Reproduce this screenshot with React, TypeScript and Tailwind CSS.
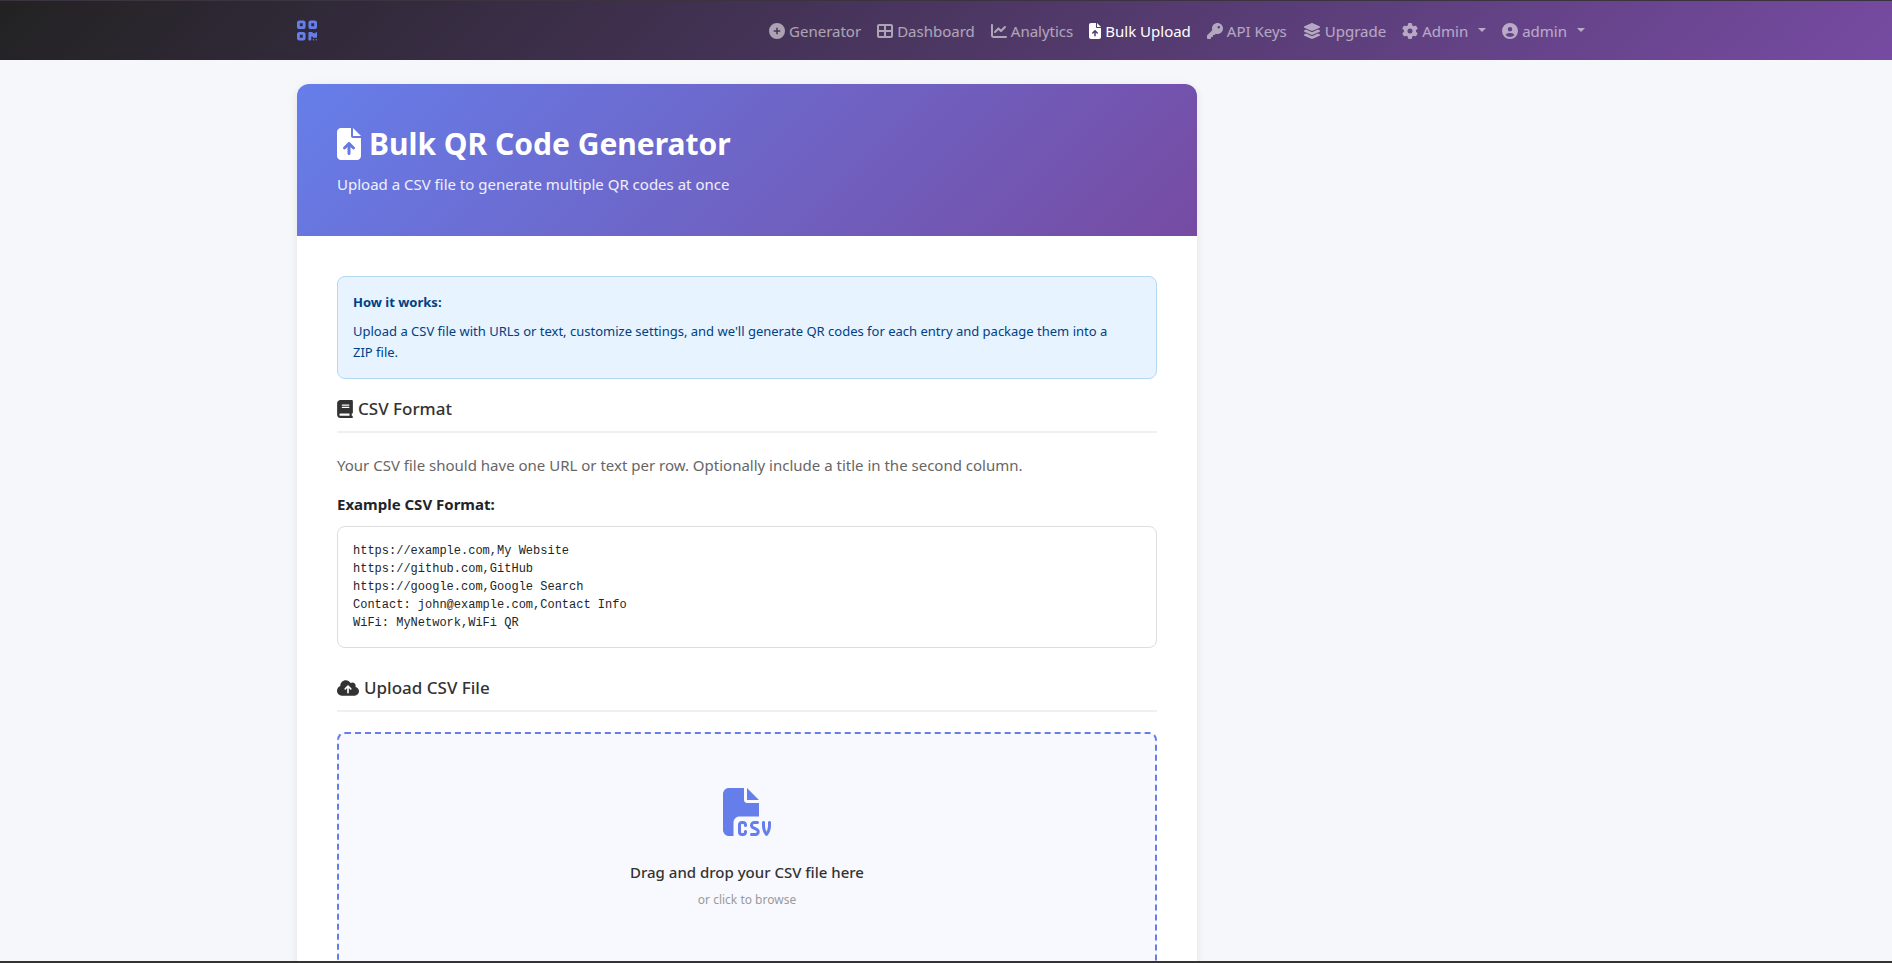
import React from "react";
import {
  FaBook,
  FaChartLine,
  FaCirclePlus,
  FaCircleUser,
  FaCloudArrowUp,
  FaFileArrowUp,
  FaFileCsv,
  FaGear,
  FaKey,
  FaLayerGroup,
  FaQrcode,
  FaTableCellsLarge,
} from "react-icons/fa6";

const links = [
  { label: "Generator", icon: FaCirclePlus, size: "w-4" },
  { label: "Dashboard", icon: FaTableCellsLarge, size: "w-4" },
  { label: "Analytics", icon: FaChartLine, size: "w-4" },
  { label: "Bulk Upload", icon: FaFileArrowUp, size: "w-3", active: true },
  { label: "API Keys", icon: FaKey, size: "w-4" },
  { label: "Upgrade", icon: FaLayerGroup, size: "w-[18px]" },
];

const menus = [
  { label: "Admin", icon: FaGear },
  { label: "admin", icon: FaCircleUser },
];

const exampleCsv = `https://example.com,My Website
https://github.com,GitHub
https://google.com,Google Search
Contact: john@example.com,Contact Info
WiFi: MyNetwork,WiFi QR`;

const Navbar = () => {
  return (
    <header className="h-[60px] shrink-0 border-t border-[#3b3440] bg-[linear-gradient(135deg,#222222_0%,#764ba2_100%)]">
      <div className="mx-auto flex h-full max-w-[1322px] items-center justify-between pl-3 pr-3.5">
        <a href="#" aria-label="Home" className="text-[#667eea]">
          <FaQrcode className="h-[23px] w-5" />
        </a>
        <nav className="flex items-center text-[15px] leading-6">
          {links.map(({ label, icon: Icon, size, active }) => (
            <a
              key={label}
              href="#"
              className={`flex items-center gap-1 px-2 whitespace-nowrap ${
                active ? "text-white" : "text-white/55"
              }`}
            >
              <Icon className={`h-4 ${size}`} />
              {label}
            </a>
          ))}
          {menus.map(({ label, icon: Icon }) => (
            <button
              key={label}
              type="button"
              className="flex items-center gap-1 px-2 whitespace-nowrap text-white/55"
            >
              <Icon className="h-4 w-4" />
              {label}
              <svg
                viewBox="0 0 8 4"
                className="mb-0.5 ml-1.5 h-1 w-2 fill-current"
              >
                <path d="M0 0h8L4 4z" />
              </svg>
            </button>
          ))}
        </nav>
      </div>
    </header>
  );
};

const SectionTitle = ({
  icon: Icon,
  iconSize,
  children,
}: {
  icon: React.ElementType;
  iconSize: string;
  children: React.ReactNode;
}) => {
  return (
    <h2 className="mb-5 flex items-center gap-[5px] border-b-2 border-[#f0f0f0] pb-2.5 text-[17px] leading-6 font-medium text-[#333333]">
      <Icon className={iconSize} />
      {children}
    </h2>
  );
};

export default function App() {
  return (
    <div className="flex h-screen flex-col overflow-hidden border-b-2 border-[#333333] bg-[#f5f7fb] font-['Noto_Sans',sans-serif] text-[#212529]">
      <Navbar />
      <main className="mx-auto w-full max-w-[1322px] pt-6 pr-3.5 pl-3">
        <div className="max-w-[900px] overflow-hidden rounded-xl bg-white shadow-[0_2px_10px_rgba(0,0,0,0.08)]">
          <div className="bg-[linear-gradient(135deg,#667eea_0%,#764ba2_100%)] p-10 text-white">
            <h1 className="mb-2 flex items-center gap-2 text-[30px] leading-10 font-bold">
              <FaFileArrowUp className="h-8 w-6" />
              Bulk QR Code Generator
            </h1>
            <p className="text-[15px] leading-6 text-white/90">
              Upload a CSV file to generate multiple QR codes at once
            </p>
          </div>

          <div className="p-10">
            <div className="mb-[18px] rounded-lg border border-[#b3d9f2] bg-[#e7f3ff] p-[15px] text-[13px] leading-[21px] text-[#004085]">
              <p className="mb-2 font-bold">How it works:</p>
              <p className="pr-8">
                Upload a CSV file with URLs or text, customize settings, and
                we'll generate QR codes for each entry and package them into a
                ZIP file.
              </p>
            </div>

            <SectionTitle icon={FaBook} iconSize="h-[18px] w-4">
              CSV Format
            </SectionTitle>
            <p className="mb-[15px] text-[15px] leading-6 text-[#666666]">
              Your CSV file should have one URL or text per row. Optionally
              include a title in the second column.
            </p>
            <p className="mb-2.5 text-[15px] leading-6 font-bold">
              Example CSV Format:
            </p>
            <pre className="mb-7 rounded-lg border border-[#dddddd] bg-white p-[15px] font-['Liberation_Mono',monospace] text-xs leading-[18px]">
              {exampleCsv}
            </pre>

            <SectionTitle icon={FaCloudArrowUp} iconSize="h-[18px] w-[22px]">
              Upload CSV File
            </SectionTitle>
            <label className="flex cursor-pointer flex-col items-center rounded-lg border-2 border-dashed border-[#667eea] bg-[#f8f9ff] px-10 pt-[54px] pb-[60px] text-center">
              <FaFileCsv className="mb-6 h-12 w-12 text-[#667eea]" />
              <span className="mb-1.5 text-[15px] leading-6 font-medium text-[#333333]">
                Drag and drop your CSV file here
              </span>
              <span className="text-xs leading-5 text-[#999999]">
                or click to browse
              </span>
              <input type="file" accept=".csv" className="sr-only" />
            </label>
          </div>
        </div>
      </main>
    </div>
  );
}
